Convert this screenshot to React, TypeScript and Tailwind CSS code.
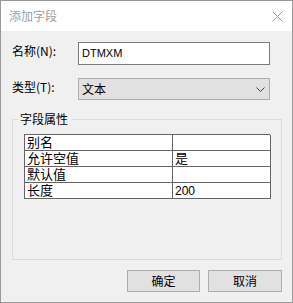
import React from "react";

const cjk = "font-['Microsoft_YaHei','Noto_Sans_CJK_SC',sans-serif]";

const rows: { name: string; value: string }[] = [
  { name: "别名", value: "" },
  { name: "允许空值", value: "是" },
  { name: "默认值", value: "" },
  { name: "长度", value: "200" },
];

const ChevronDown = () => (
  <svg width="9" height="5" viewBox="0 0 9 5" fill="none">
    <path d="M0.5 0.5 L4.5 4.5 L8.5 0.5" stroke="#404040" strokeWidth="1" />
  </svg>
);

const CloseIcon = () => (
  <svg width="11" height="11" viewBox="0 0 11 11" fill="none">
    <path d="M0.5 0.5 L10.5 10.5 M10.5 0.5 L0.5 10.5" stroke="#9a9a9a" strokeWidth="1" />
  </svg>
);

export default function App() {
  return (
    <div
      className={`w-[293px] h-[303px] border border-[#9a9a9a] bg-[#f0f0f0] flex flex-col text-[12px] text-black ${cjk}`}
    >
      {/* title bar */}
      <div className="h-[30px] bg-white flex items-center justify-between pl-[8px] pr-[9px]">
        <span className="text-[#a0a0a0] leading-[16px]">添加字段</span>
        <CloseIcon />
      </div>

      <div className="flex flex-col pt-[11px] pl-[11px] pr-[10px]">
        {/* name */}
        <div className="flex items-start">
          <label className="w-[66px] leading-[16px] pt-[1px]">名称(N):</label>
          <div className="w-[192px] h-[23px] border border-[#7a7a7a] bg-white flex items-center pl-[3px]">
            <span className="font-['Liberation_Sans',sans-serif] text-[11px]">DTMXM</span>
          </div>
        </div>

        {/* type */}
        <div className="flex items-start mt-[13px]">
          <label className="w-[66px] leading-[16px] pt-[1px]">类型(T):</label>
          <div className="w-[192px] h-[22px] border border-[#adadad] bg-[#e1e1e1] flex items-center justify-between pl-[3px] pr-[4px]">
            <span className="leading-[16px]">文本</span>
            <ChevronDown />
          </div>
        </div>

        {/* group box */}
        <div className="relative mt-[19px] w-[270px] h-[141px] border border-[#dcdcdc] pt-[14px] px-[11px]">
          <span className="absolute -top-[9px] left-[5px] bg-[#f0f0f0] pl-[2px] pr-[4px] leading-[16px]">
            字段属性
          </span>
          <div className="grid grid-cols-[148px_98px] w-[246px] border-t border-l border-[#646464] text-[13px] font-['Liberation_Sans','Noto_Sans_CJK_SC',sans-serif]">
            {rows.map((r) => (
              <React.Fragment key={r.name}>
                <div className="h-[16px] border-r border-b border-[#646464] bg-white pl-[2px] leading-[15px] overflow-hidden">
                  {r.name}
                </div>
                <div className="h-[16px] border-r border-b border-[#646464] bg-white pl-[2px] leading-[15px] overflow-hidden">
                  {r.value === "200" ? <span className="text-[12px]">{r.value}</span> : r.value}
                </div>
              </React.Fragment>
            ))}
          </div>
        </div>

        {/* buttons */}
        <div className="flex justify-end gap-[8px] mt-[10px]">
          <button className="w-[73px] h-[22px] border border-[#adadad] bg-[#e1e1e1] leading-[16px]">
            确定
          </button>
          <button className="w-[74px] h-[22px] border border-[#adadad] bg-[#e1e1e1] leading-[16px]">
            取消
          </button>
        </div>
      </div>
    </div>
  );
}
